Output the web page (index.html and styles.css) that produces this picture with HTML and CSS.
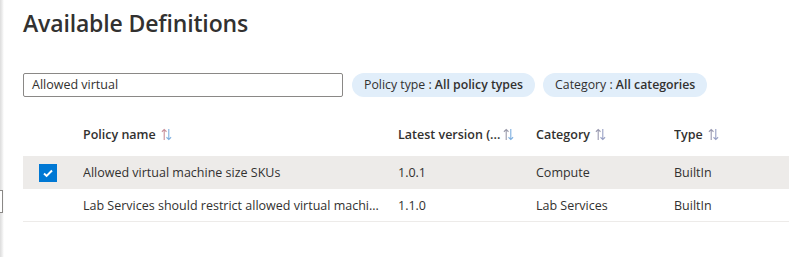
FILE: index.html
```html
<!DOCTYPE html>
<html>
<head>
<meta charset="utf-8">
<link rel="stylesheet" href="styles.css">
</head>
<body>
<div class="page">
  <div class="behind"></div>
  <h1 class="title">Available Definitions</h1>
  <div class="filters">
    <div class="search">Allowed virtual</div>
    <div class="pill">Policy type : <b>All policy types</b></div>
    <div class="pill">Category : <b>All categories</b></div>
  </div>
  <div class="table">
    <div class="row head">
      <div class="cell check"></div>
      <div class="cell name"><span>Policy name</span><svg class="sort" viewBox="0 0 12 14"><path d="M3.5 13V1.5M1 4l2.5-2.5L6 4" stroke="#c8909a" fill="none" stroke-width="1.2"/><path d="M8.5 1v11.5M6 10l2.5 2.5L11 10" stroke="#7fb0e0" fill="none" stroke-width="1.2"/></svg></div>
      <div class="cell ver"><span class="lbl">Latest version (...</span><svg class="sort" viewBox="0 0 12 14"><path d="M3.5 13V1.5M1 4l2.5-2.5L6 4" stroke="#9a9aaa" fill="none" stroke-width="1.2"/><path d="M8.5 1v11.5M6 10l2.5 2.5L11 10" stroke="#7fb0e0" fill="none" stroke-width="1.2"/></svg></div>
      <div class="cell cat"><span>Category</span><svg class="sort" viewBox="0 0 12 14"><path d="M3.5 13V1.5M1 4l2.5-2.5L6 4" stroke="#9a9ab0" fill="none" stroke-width="1.2"/><path d="M8.5 1v11.5M6 10l2.5 2.5L11 10" stroke="#98a0c4" fill="none" stroke-width="1.2"/></svg></div>
      <div class="cell type"><span>Type</span><svg class="sort" viewBox="0 0 12 14"><path d="M3.5 13V1.5M1 4l2.5-2.5L6 4" stroke="#9a9ab0" fill="none" stroke-width="1.2"/><path d="M8.5 1v11.5M6 10l2.5 2.5L11 10" stroke="#98a0c4" fill="none" stroke-width="1.2"/></svg></div>
    </div>
    <div class="row item selected">
      <div class="cell check"><span class="box"><svg viewBox="0 0 18 18"><path d="M5 9.5l2.6 2.4L13 6.5" stroke="#fff" stroke-width="2" fill="none"/></svg></span></div>
      <div class="cell name">Allowed virtual machine size SKUs</div>
      <div class="cell ver">1.0.1</div>
      <div class="cell cat">Compute</div>
      <div class="cell type">BuiltIn</div>
    </div>
    <div class="row item last">
      <div class="cell check"></div>
      <div class="cell name">Lab Services should restrict allowed virtual machi...</div>
      <div class="cell ver">1.1.0</div>
      <div class="cell cat">Lab Services</div>
      <div class="cell type">BuiltIn</div>
    </div>
  </div>
</div>
</body>
</html>
```
FILE: styles.css
```css
* { box-sizing: border-box; }
html, body { margin: 0; padding: 0; background: #fff; }
body {
  font-family: "Open Sans", "Noto Sans", sans-serif;
  color: #323130;
  width: 789px;
  height: 257px;
  overflow: hidden;
}
.page {
  position: relative;
  height: 257px;
  padding-left: 23px;
  background: linear-gradient(to right, #dcdcdc 0, #ececec 2px, #fff 4px);
}
.behind {
  position: absolute;
  left: -6px;
  top: 190px;
  width: 9px;
  height: 23px;
  border: 1px solid #8a8886;
  background: #fff;
}
.title {
  margin: 0;
  padding-top: 8px;
  font-size: 23px;
  font-weight: 600;
  line-height: 30px;
  letter-spacing: -0.15px;
}
.filters {
  display: flex;
  gap: 9px;
  margin-top: 35px;
  align-items: center;
}
.search {
  width: 320px;
  height: 24px;
  border: 1px solid #8a8886;
  border-radius: 2px;
  padding-left: 8px;
  font-size: 12.5px;
  line-height: 22px;
}
.pill {
  height: 24px;
  line-height: 24px;
  padding: 0 12px;
  border-radius: 12px;
  background: #e1eefa;
  font-size: 12.3px;
  white-space: nowrap;
}
.pill + .pill { margin-left: -1px; }
.pill b { font-weight: 600; }
.table { margin-top: 16px; }
.row {
  display: grid;
  grid-template-columns: 60px 315px 138px 138px 1fr;
  align-items: center;
  font-size: 12.5px;
}
.head { height: 43px; font-weight: 600; }
.item { height: 33px; }
.selected { background: #edebe9; }
.last { border-bottom: 1px solid #edebe9; }
.cell { white-space: nowrap; overflow: hidden; display: flex; align-items: center; }
.sort { width: 11px; height: 13px; margin-left: 5px; }
.ver .lbl { width: 100px; }
.check { padding-left: 16px; }
.box {
  width: 18px;
  height: 18px;
  background: #0078d4;
  display: block;
}
.box svg { width: 18px; height: 18px; display: block; }
```
